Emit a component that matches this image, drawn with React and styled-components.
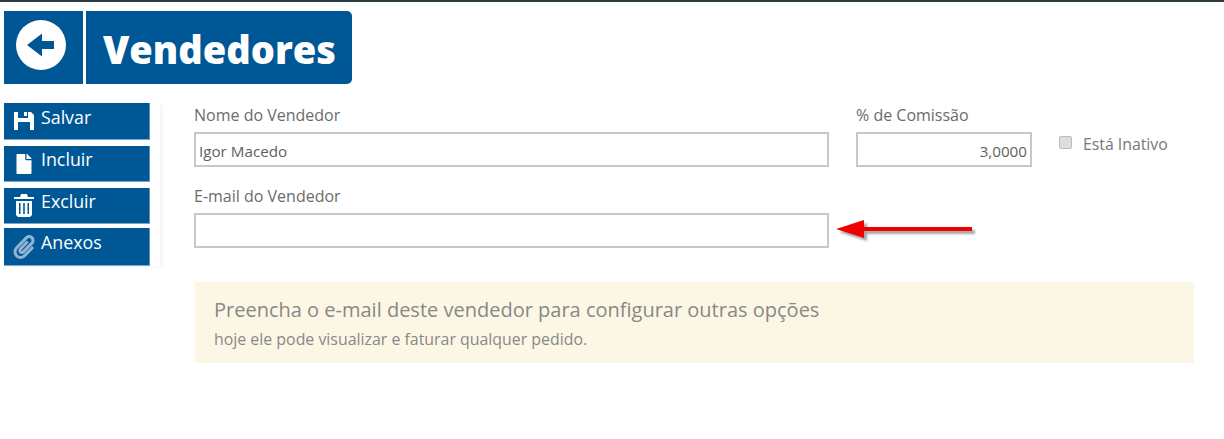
import React from "react";
import styled, { createGlobalStyle } from "styled-components";
import { FaFile, FaPaperclip } from "react-icons/fa";

const GlobalStyle = createGlobalStyle`
  html, body {
    margin: 0;
    padding: 0;
    background: #fff;
    font-family: "Open Sans", "Noto Sans", sans-serif;
  }
`;

const Page = styled.div`
  width: 1224px;
  height: 439px;
  overflow: hidden;
  border-top: 2px solid #2c3a42;
  box-sizing: border-box;
`;

const Header = styled.div`
  display: flex;
  gap: 3px;
  margin: 9px 0 0 4px;
  height: 73px;
`;

const BackTile = styled.div`
  width: 79px;
  background: #005796;
  display: flex;
  align-items: center;
  justify-content: center;
  padding: 0 5px 5px 0;
  box-sizing: border-box;
`;

const BackCircle = styled.div`
  width: 50px;
  height: 50px;
  border-radius: 50%;
  background: #fff;
  display: flex;
  align-items: center;
  justify-content: center;
`;

const TitleTile = styled.div`
  width: 266px;
  background: #005796;
  border-radius: 0 5px 5px 0;
  display: flex;
  align-items: center;
  padding: 3px 0 0 17px;
  box-sizing: border-box;
`;

const Title = styled.h1`
  margin: 0;
  color: #fff;
  font-family: "Open Sans", "Noto Sans", sans-serif;
  font-size: 38px;
  font-weight: 800;
  letter-spacing: 0;
  line-height: 1;
`;

const Body = styled.div`
  display: flex;
  margin-top: 19px;
`;

const Sidebar = styled.div`
  width: 156px;
  margin-left: 4px;
  height: 163px;
  display: flex;
  flex-direction: column;
  box-shadow: 2px 1px 4px rgba(0, 0, 0, 0.05);
`;

const SideButton = styled.div`
  width: 146px;
  height: ${({ $h }) => $h}px;
  margin-bottom: ${({ $gap }) => $gap}px;
  background: #005796;
  color: #fff;
  display: flex;
  align-items: flex-start;
  font-size: 17.8px;
  line-height: 24px;
  box-sizing: border-box;
  border-right: 1px solid #5c93bd;
  border-bottom: 1px solid #7ba8cb;
`;

const IconSlot = styled.span`
  width: 37px;
  height: 100%;
  display: flex;
  align-items: center;
  justify-content: center;
  padding-left: 3px;
  box-sizing: border-box;
  font-size: ${({ $size }) => $size}px;
  color: ${({ $muted }) => ($muted ? "#8fb4d2" : "#fff")};
`;

const ButtonLabel = styled.span`
  margin-top: ${({ $top }) => $top}px;
`;

const Form = styled.div`
  margin-left: 34px;
  width: 1000px;
`;

const Row = styled.div`
  display: flex;
  align-items: flex-start;
`;

const Field = styled.div`
  width: ${({ $w }) => $w}px;
  margin-right: ${({ $mr }) => $mr || 0}px;
  margin-top: ${({ $mt }) => $mt || 0}px;
`;

const Label = styled.div`
  font-size: 16px;
  line-height: 21px;
  height: 27px;
  color: #6b6b6b;
`;

const Input = styled.div`
  height: 35px;
  box-sizing: border-box;
  border: 2px solid #c8c8c8;
  background: #fff;
  display: flex;
  align-items: center;
  justify-content: ${({ $right }) => ($right ? "flex-end" : "flex-start")};
  padding: 3px 3px 0 3px;
  font-size: 15.2px;
  color: #5f5f5f;
`;

const CheckWrap = styled.div`
  display: flex;
  align-items: center;
  margin-top: 30px;
  font-size: 15.8px;
  color: #777;
`;

const Check = styled.span`
  width: 13px;
  height: 13px;
  margin-right: 11px;
  border: 1px solid #bbb;
  border-radius: 2px;
  background: #ddd;
  box-sizing: border-box;
  margin-top: -3px;
`;

const Alert = styled.div`
  margin: 34px 0 0 1px;
  width: 999px;
  height: 81px;
  box-sizing: border-box;
  background: #fcf7e4;
  padding: 14px 19px 0;
  color: #888;
`;

const AlertTitle = styled.div`
  font-size: 20px;
  line-height: 27px;
`;

const AlertText = styled.div`
  font-size: 15.9px;
  line-height: 22px;
  margin-top: 5px;
`;

const ArrowSvg = styled.svg`
  margin: 4px 0 0 5px;
  overflow: visible;
`;

function BackArrow() {
  return (
    <svg width="30" height="26" viewBox="0 0 30 26" fill="#005796">
      <path d="M1 13L16 1.500V9h12v8H16v7.500z" />
    </svg>
  );
}

function SaveIcon() {
  return (
    <svg width="20" height="20" viewBox="0 0 20 20" fill="currentColor">
      <path d="M0 1h4v6h10V1h3l3 3v15h-4v-8H4v8H0z" />
      <path d="M10 1h3v4h-3z" />
    </svg>
  );
}

function TrashIcon() {
  return (
    <svg width="20" height="23" viewBox="0 0 20 23" fill="currentColor">
      <path d="M7 0h6l1 3h6v2H0V3h6z" />
      <path fillRule="evenodd" d="M2 7h16v14l-2 2H4l-2-2zM5 9v11h1.500V9zM9.200 9v11h1.600V9zM13.500 9v11H15V9z" />
    </svg>
  );
}

function RedArrow() {
  return (
    <ArrowSvg width="146" height="26" viewBox="0 0 146 26">
      <defs>
        <filter id="arrow-shadow" x="-10%" y="-50%" width="120%" height="200%">
          <feGaussianBlur stdDeviation="1" />
        </filter>
      </defs>
      <path d="M4 14l28-9v7h108v4H32v7z" fill="#000" opacity="0.35" filter="url(#arrow-shadow)" transform="translate(1 2)" />
      <path d="M2 13l28-9v7h108v4H30v7z" fill="#f00000" />
    </ArrowSvg>
  );
}

const buttons = [
  { label: "Salvar", icon: <SaveIcon />, h: 37, gap: 6, top: 2 },
  { label: "Incluir", icon: <FaFile />, size: 20, h: 36, gap: 6, top: 1 },
  { label: "Excluir", icon: <TrashIcon />, h: 36, gap: 4, top: 1 },
  { label: "Anexos", icon: <FaPaperclip />, size: 24, muted: true, h: 38, gap: 0, top: 2 },
];

export default function App() {
  return (
    <>
      <GlobalStyle />
      <Page>
        <Header>
          <BackTile>
            <BackCircle>
              <BackArrow />
            </BackCircle>
          </BackTile>
          <TitleTile>
            <Title>Vendedores</Title>
          </TitleTile>
        </Header>
        <Body>
          <Sidebar>
            {buttons.map((b) => (
              <SideButton key={b.label} $h={b.h} $gap={b.gap}>
                <IconSlot $size={b.size} $muted={b.muted}>{b.icon}</IconSlot>
                <ButtonLabel $top={b.top}>{b.label}</ButtonLabel>
              </SideButton>
            ))}
          </Sidebar>
          <Form>
            <Row>
              <Field $w={635} $mr={27} $mt={2}>
                <Label>Nome do Vendedor</Label>
                <Input>Igor Macedo</Input>
              </Field>
              <Field $w={176} $mr={27} $mt={2}>
                <Label>% de Comissão</Label>
                <Input $right>3,0000</Input>
              </Field>
              <CheckWrap>
                <Check />
                Está Inativo
              </CheckWrap>
            </Row>
            <Row>
              <Field $w={635} $mt={19}>
                <Label>E-mail do Vendedor</Label>
                <Input />
              </Field>
              <Field $w={150} $mt={45}>
                <RedArrow />
              </Field>
            </Row>
            <Alert>
              <AlertTitle>Preencha o e-mail deste vendedor para configurar outras opções</AlertTitle>
              <AlertText>hoje ele pode visualizar e faturar qualquer pedido.</AlertText>
            </Alert>
          </Form>
        </Body>
      </Page>
    </>
  );
}
